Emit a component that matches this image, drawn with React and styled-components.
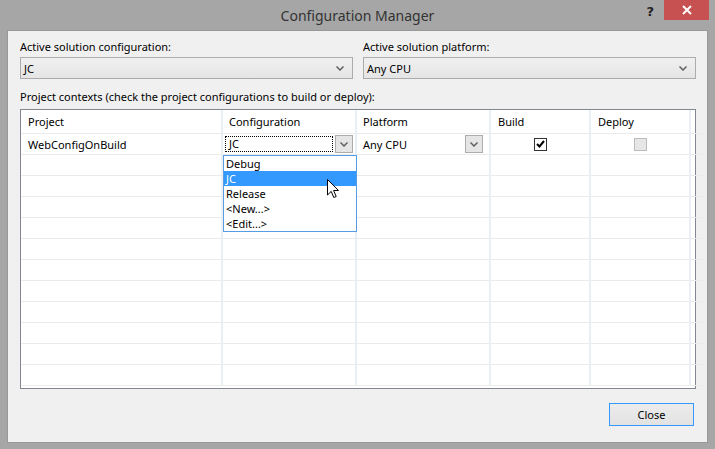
import React from 'react';
import styled, { createGlobalStyle } from 'styled-components';

const GlobalStyle = createGlobalStyle`
  body {
    margin: 0;
    font-family: "Noto Sans", "DejaVu Sans", sans-serif;
    font-size: 11px;
    color: #000;
  }
`;

const StyledWindow = styled.div`
  width: 715px;
  height: 449px;
  background: #a6a6a6;
  display: flex;
  flex-direction: column;
  overflow: hidden;
`;

const TitleBar = styled.div`
  height: 30px;
  display: grid;
  grid-template-columns: 1fr auto 1fr;
  align-items: center;

  .title {
    grid-column: 2;
    font-size: 14px;
    color: #333;
    padding-top: 1px;
  }

  .controls {
    justify-self: end;
    align-self: start;
    display: flex;
    align-items: flex-start;
  }
`;

const HelpButton = styled.span`
  font-family: "DejaVu Sans", sans-serif;
  font-weight: bold;
  font-size: 13px;
  color: #222;
  margin: 4px 10px 0 0;
`;

const CloseX = styled.span`
  width: 45px;
  height: 20px;
  margin-right: 6px;
  background: #c75050;
  display: flex;
  align-items: center;
  justify-content: center;
`;

const Client = styled.div`
  flex: 1;
  margin: 0 7px 6px 7px;
  border: 1px solid #989898;
  background: #f0f0f0;
  padding: 8px 11px 0 12px;
  display: flex;
  flex-direction: column;
`;

const Label = styled.div`
  line-height: 16px;
  height: 16px;
  white-space: nowrap;
`;

const TopRow = styled.div`
  display: grid;
  grid-template-columns: 1fr 1fr;
  gap: 10px;

  ${Label} {
    margin-bottom: 2px;
  }
`;

const Combo = styled.div`
  height: 22px;
  box-sizing: border-box;
  border: 1px solid #acacac;
  background: linear-gradient(#f0f0f0, #e5e5e5);
  display: flex;
  align-items: center;
  justify-content: space-between;
  padding: 0 8px 0 3px;
`;

const Chevron = ({ color = '#606060' }) => (
  <svg width="8" height="5" viewBox="0 0 8 5">
    <path d="M0.5 0.5 L4 4 L7.5 0.5" fill="none" stroke={color} strokeWidth="1.5" />
  </svg>
);

const ContextsLabel = styled(Label)`
  margin: 10px 0 4px;
`;

const StyledGrid = styled.div`
  height: 280px;
  box-sizing: border-box;
  border: 1px solid #828790;
  background: #fff;
  display: flex;
  flex-direction: column;
`;

const Row = styled.div`
  display: grid;
  grid-template-columns: 202px 134px 134px 100px 100px 1fr;
  height: ${({ header }) => (header ? 24 : 21)}px;
`;

const Cell = styled.div`
  position: relative;
  box-sizing: border-box;
  border-bottom: 1px solid #ebebeb;
  border-right: ${({ last }) => (last ? 'none' : '2px solid #eaeef5')};
  padding: 0 ${({ pad = 6 }) => pad}px;
  display: flex;
  align-items: center;
  justify-content: ${({ center }) => (center ? 'center' : 'space-between')};
  white-space: nowrap;
`;

const FocusText = styled.div`
  width: 108px;
  height: 16px;
  box-sizing: border-box;
  border: 1px dotted #000;
  padding-left: 3px;
  line-height: 14px;
`;

const DropButton = styled.div`
  width: 18px;
  height: 18px;
  box-sizing: border-box;
  border: 1px solid #acacac;
  background: #e5e5e5;
  display: flex;
  align-items: center;
  justify-content: center;
`;

const Check = styled.div`
  width: 13px;
  height: 13px;
  box-sizing: border-box;
  border: 1px solid ${({ disabled }) => (disabled ? '#bcbcbc' : '#333')};
  background: ${({ disabled }) => (disabled ? '#e6e6e6' : '#fff')};
  display: flex;
  align-items: center;
  justify-content: center;
`;

const DropList = styled.ul`
  position: absolute;
  left: 0;
  top: calc(100% + 1px);
  width: 134px;
  margin: 0;
  padding: 0;
  list-style: none;
  box-sizing: border-box;
  border: 1px solid #569de5;
  background: #fff;
  z-index: 2;
`;

const DropItem = styled.li`
  height: 15px;
  line-height: 15px;
  padding-left: 2px;
  background: ${({ active }) => (active ? '#3399ff' : 'transparent')};
  color: ${({ active }) => (active ? '#fff' : '#000')};
`;

// mouse pointer hovering the highlighted item
const Cursor = styled.svg`
  position: absolute;
  left: 104px;
  top: 45px;
  z-index: 3;
`;

const Footer = styled.div`
  display: flex;
  justify-content: flex-end;
  padding: 14px 2px 0 0;
`;

const Button = styled.button`
  width: 85px;
  height: 23px;
  box-sizing: border-box;
  border: 1px solid #3399ff;
  background: linear-gradient(#ececec, #e2e2e2);
  font-family: inherit;
  font-size: 11px;
  color: #000;
  padding: 0;
`;

const options = ['Debug', 'JC', 'Release', '<New...>', '<Edit...>'];

const App = () => {
  const emptyRows = Array.from({ length: 11 });

  return (
    <StyledWindow>
      <GlobalStyle />
      <TitleBar>
        <span className="title">Configuration Manager</span>
        <div className="controls">
          <HelpButton>?</HelpButton>
          <CloseX>
            <svg width="10" height="10" viewBox="0 0 10 10">
              <path d="M1 1 L9 9 M9 1 L1 9" stroke="#fff" strokeWidth="2" />
            </svg>
          </CloseX>
        </div>
      </TitleBar>

      <Client>
        <TopRow>
          <div>
            <Label>Active solution configuration:</Label>
            <Combo>
              JC
              <Chevron />
            </Combo>
          </div>
          <div>
            <Label>Active solution platform:</Label>
            <Combo>
              Any CPU
              <Chevron />
            </Combo>
          </div>
        </TopRow>

        <ContextsLabel>
          Project contexts (check the project configurations to build or deploy):
        </ContextsLabel>

        <StyledGrid>
          <Row header>
            <Cell pad={7}>Project</Cell>
            <Cell>Configuration</Cell>
            <Cell>Platform</Cell>
            <Cell pad={7}>Build</Cell>
            <Cell pad={7}>Deploy</Cell>
            <Cell last />
          </Row>
          <Row>
            <Cell pad={7}>WebConfigOnBuild</Cell>
            <Cell pad={2}>
              <FocusText>JC</FocusText>
              <DropButton>
                <Chevron />
              </DropButton>
              <DropList>
                {options.map(opt => (
                  <DropItem key={opt} active={opt === 'JC'}>
                    {opt}
                  </DropItem>
                ))}
              </DropList>
              <Cursor width="13" height="20" viewBox="0 0 13 20">
                <path
                  d="M0.5 0.5 L0.5 16 L4.2 12.4 L6.8 18.5 L9.2 17.5 L6.6 11.5 L11.5 11.5 Z"
                  fill="#fff"
                  stroke="#000"
                  strokeWidth="1"
                  strokeLinejoin="round"
                />
              </Cursor>
            </Cell>
            <Cell>
              Any CPU
              <DropButton>
                <Chevron />
              </DropButton>
            </Cell>
            <Cell center>
              <Check>
                <svg width="9" height="8" viewBox="0 0 9 8">
                  <path d="M1 4 L3.5 6.5 L8 1" fill="none" stroke="#000" strokeWidth="2" />
                </svg>
              </Check>
            </Cell>
            <Cell center>
              <Check disabled />
            </Cell>
            <Cell last />
          </Row>
          {emptyRows.map((_, i) => (
            <Row key={i}>
              <Cell />
              <Cell />
              <Cell />
              <Cell />
              <Cell />
              <Cell last />
            </Row>
          ))}
        </StyledGrid>

        <Footer>
          <Button>Close</Button>
        </Footer>
      </Client>
    </StyledWindow>
  );
};

export default App;
